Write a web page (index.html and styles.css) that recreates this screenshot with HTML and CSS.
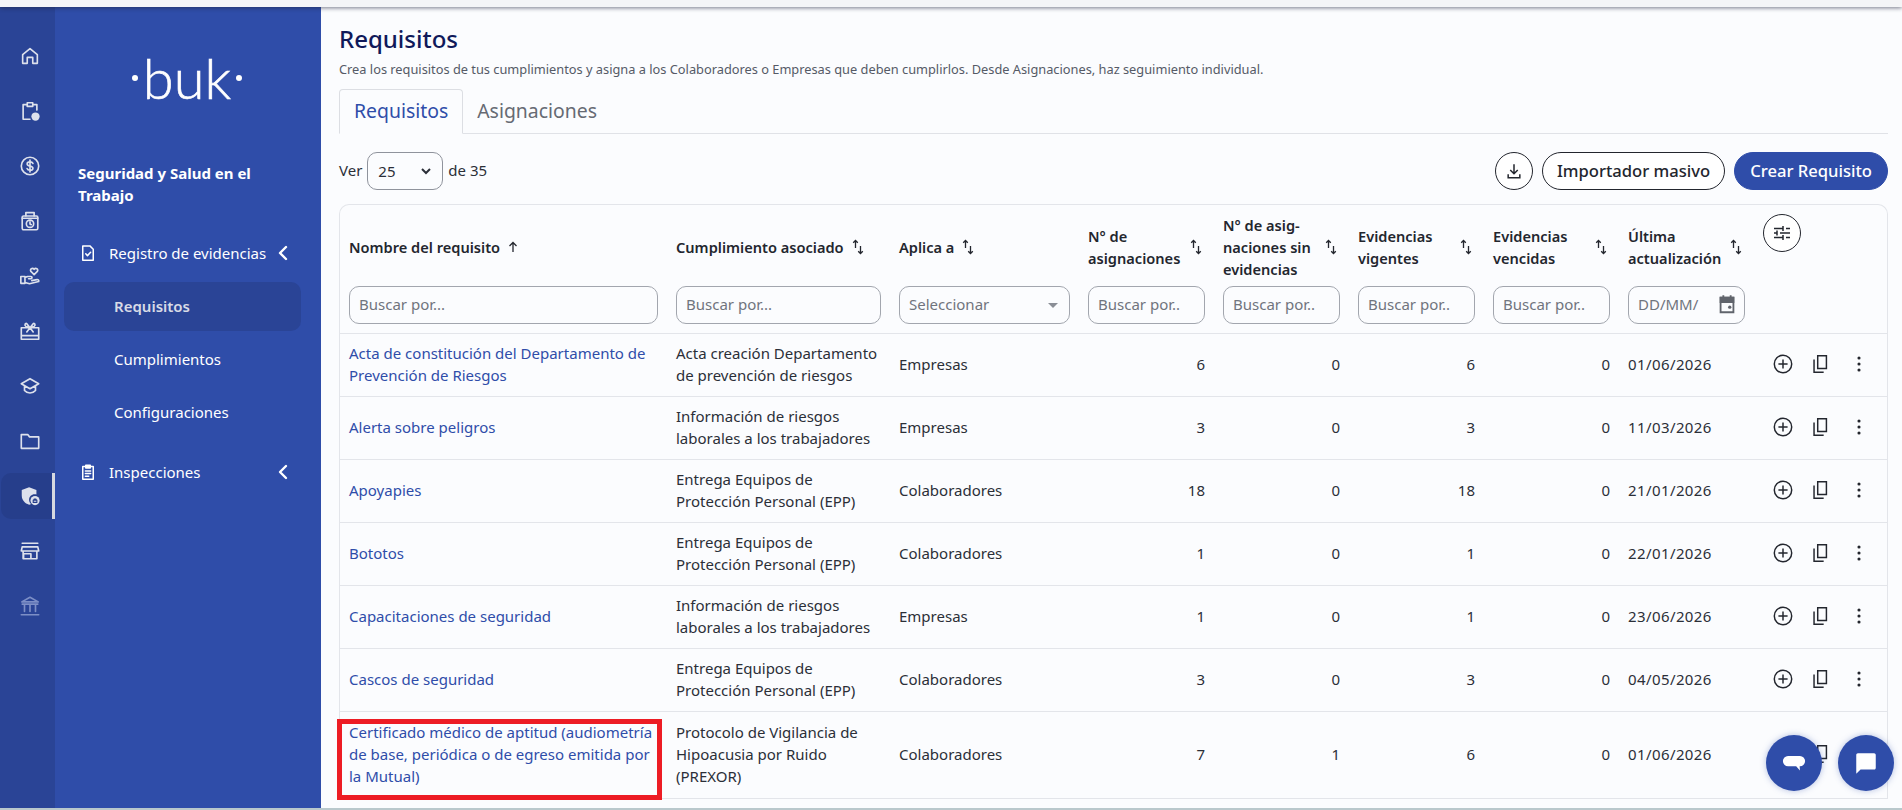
FILE: index.html
```html
<!DOCTYPE html>
<html lang="es">
<head>
    <meta charset="UTF-8">
    <meta name="viewport" content="width=device-width, initial-scale=1.0">
    <title>Requisitos</title>
    <link rel="stylesheet" href="styles.css">
</head>
<body>
    <svg class="sprite" xmlns="http://www.w3.org/2000/svg">
        <symbol id="i-sort" viewBox="0 0 14 16"><path d="M4.5 9V1.5M2.2 3.7 4.5 1.5l2.3 2.2M9.5 7v7.5M7.2 12.3l2.3 2.2 2.3-2.2"/></symbol>
        <symbol id="i-plus" viewBox="0 0 24 24"><circle cx="12" cy="12" r="9.5"/><path d="M12 7v10M7 12h10"/></symbol>
        <symbol id="i-copy" viewBox="0 0 24 24"><path d="M9.5 3H19v14H9.5zM5.5 7v14H16"/></symbol>
        <symbol id="i-dots" viewBox="0 0 24 24"><circle cx="12" cy="5.5" r="1.7"/><circle cx="12" cy="12" r="1.7"/><circle cx="12" cy="18.5" r="1.7"/></symbol>
    </svg>

    <div class="topbar"></div>
    <div class="app">
        <nav class="rail">
            <a class="rail-item"><svg viewBox="0 0 24 24"><path d="M4 10.5 12 4l8 6.5V20h-5v-6.5H9V20H4z"/></svg></a>
            <a class="rail-item"><svg viewBox="0 0 24 24"><path d="M9 5H4.5v16H12M15 5h4.5v6M9 3h6v4H9z"/><circle class="solid" cx="18" cy="18" r="4.5"/></svg></a>
            <a class="rail-item"><svg viewBox="0 0 24 24"><circle cx="12" cy="12" r="9.5"/><path d="M15.2 9.2c-.5-1.100-1.700-1.700-3.200-1.700-1.800 0-3.100.9-3.100 2.200 0 3 6.300 1.600 6.300 4.700 0 1.300-1.400 2.200-3.200 2.200-1.500 0-2.800-.7-3.200-1.800M12 5.5v13"/></svg></a>
            <a class="rail-item"><svg viewBox="0 0 24 24"><rect x="3.5" y="6.5" width="17" height="15" rx="1.5"/><path d="M7.5 6.5V2.8h9v3.700M3.5 9h17"/><circle cx="12" cy="15" r="4"/><path d="M12 13v2.200l1.400.8"/></svg></a>
            <a class="rail-item"><svg viewBox="0 0 24 24"><path d="M2 12.5h4.500V20H2zM6.500 13.500l3-1h3.500c1.600 0 1.600 2.500 0 2.500h-2.500M6.500 19l5 1.500 10-2.500c.5-1.800-1-2.300-2-2l-5.500 1"/><path d="M16.5 10.500 13 7c-1.700-2.300 1.800-4.700 3.500-2.200 1.700-2.500 5.200-.1 3.500 2.200z"/></svg></a>
            <a class="rail-item"><svg viewBox="0 0 24 24"><path d="M2.5 8.500h19V21h-19zM2.500 17h19M12 8.500 8.500 4c-1.500-1-3 1.500-1 3l4.500 1.500zM12 8.500 15.500 4c1.500-1 3 1.500 1 3L12 8.500zM8.500 13 12 8.500l3.500 4.500"/></svg></a>
            <a class="rail-item"><svg viewBox="0 0 24 24"><path d="M12 4 2.500 9.500 12 15l9.500-5.500zM6 12v5c3 3.500 9 3.500 12 0v-5"/></svg></a>
            <a class="rail-item"><svg viewBox="0 0 24 24"><path d="M2.5 5h7l2 2.500h10V20h-19z"/></svg></a>
            <a class="rail-item rail-active"><svg viewBox="0 0 24 24"><path class="solid" d="M11 2.500 3 5.500v6c0 5 3.500 8.700 8 10 .8-.2 1.500-.5 2.200-.9-1.300-1.100-2.200-2.700-2.200-4.600 0-3.300 2.700-6 6-6 .7 0 1.400.1 2 .4V5.500z"/><circle class="solid" cx="17.5" cy="17" r="5"/><path class="hole" d="M15.5 16.500h4V19h-4zM16.500 16.500v-1.200h2v1.200"/></svg></a>
            <a class="rail-item"><svg viewBox="0 0 24 24"><path d="M3.5 3.500h17M3.500 7.500h17l1 4.500H2.500zM4.500 12v8.500h15V12M5 20.500V15h8v5.500"/></svg></a>
            <a class="rail-item rail-dim"><svg viewBox="0 0 24 24"><path d="M12 2.500 3 7.500h18zM2.500 21.500h19M6 11v7M12 11v7M18 11v7M3.500 10h17"/></svg></a>
        </nav>

        <aside class="panel">
            <div class="logo"><span class="logo-dot"></span><span class="logo-text">buk</span><span class="logo-dot"></span></div>
            <h2 class="module">Seguridad y Salud en el Trabajo</h2>
            <div class="menu-head">
                <svg viewBox="0 0 24 24"><path d="M5 2.500h9.500L19 7v14.500H5zM9 13l2.300 2.500L15.500 11"/></svg>
                <span>Registro de evidencias</span>
                <svg class="chev" viewBox="0 0 12 16"><path d="M9 2 3 8l6 6"/></svg>
            </div>
            <a class="menu-sub menu-current">Requisitos</a>
            <a class="menu-sub">Cumplimientos</a>
            <a class="menu-sub">Configuraciones</a>
            <div class="menu-head menu-second">
                <svg viewBox="0 0 24 24"><path d="M5 4.500h14v17H5zM9 3h6v3.500H9zM8.500 10.500h7M8.500 14h7M8.500 17.500H13"/></svg>
                <span>Inspecciones</span>
                <svg class="chev" viewBox="0 0 12 16"><path d="M9 2 3 8l6 6"/></svg>
            </div>
        </aside>

        <main class="main">
            <h1 class="title">Requisitos</h1>
            <p class="subtitle">Crea los requisitos de tus cumplimientos y asigna a los Colaboradores o Empresas que deben cumplirlos. Desde Asignaciones, haz seguimiento individual.</p>

            <div class="tabs">
                <a class="tab tab-active">Requisitos</a>
                <a class="tab">Asignaciones</a>
            </div>

            <div class="toolbar">
                <div class="pager">
                    <span>Ver</span>
                    <div class="page-select"><span>25</span>
                        <svg viewBox="0 0 12 8"><path d="M2 2l4 4 4-4"/></svg>
                    </div>
                    <span>de 35</span>
                </div>
                <div class="actions">
                    <button class="btn btn-icon"><svg viewBox="0 0 24 24"><path d="M12 4v11M7.500 10.800 12 15.200l4.500-4.400M5 16v4h14v-4"/></svg></button>
                    <button class="btn">Importador masivo</button>
                    <button class="btn btn-primary">Crear Requisito</button>
                </div>
            </div>

            <div class="table-box">
                <table class="grid">
                    <colgroup>
                        <col class="c-name"><col class="c-comp"><col class="c-apply">
                        <col class="c-num"><col class="c-num"><col class="c-num"><col class="c-num"><col class="c-num">
                        <col class="c-act">
                    </colgroup>
                    <thead>
                        <tr class="head-row">
                            <th><div class="th-in th-auto">Nombre del requisito <svg class="sort-up" viewBox="0 0 12 12"><path d="M6 11V1.500M2.500 5 6 1.500 9.500 5"/></svg></div></th>
                            <th><div class="th-in th-auto">Cumplimiento asociado <svg class="sort"><use href="#i-sort"/></svg></div></th>
                            <th><div class="th-in th-auto">Aplica a <svg class="sort"><use href="#i-sort"/></svg></div></th>
                            <th><div class="th-in"><span>N° de asignaciones</span><svg class="sort"><use href="#i-sort"/></svg></div></th>
                            <th><div class="th-in"><span>N° de asig-<br>naciones sin evidencias</span><svg class="sort"><use href="#i-sort"/></svg></div></th>
                            <th><div class="th-in"><span>Evidencias vigentes</span><svg class="sort"><use href="#i-sort"/></svg></div></th>
                            <th><div class="th-in"><span>Evidencias vencidas</span><svg class="sort"><use href="#i-sort"/></svg></div></th>
                            <th><div class="th-in"><span>Última actualización</span><svg class="sort"><use href="#i-sort"/></svg></div></th>
                            <th class="th-tune"><button class="btn btn-icon"><svg viewBox="0 0 24 24"><path d="M4 7.500h9M16 7.500h4M13 5v5M4 12h3M10 12h10M7 9.500v5M4 16.500h9M16 16.500h4M13 14v5"/></svg></button></th>
                        </tr>
                        <tr class="filter-row">
                            <td><div class="field">Buscar por...</div></td>
                            <td><div class="field">Buscar por...</div></td>
                            <td><div class="field field-select">Seleccionar<i class="caret"></i></div></td>
                            <td><div class="field">Buscar por..</div></td>
                            <td><div class="field">Buscar por..</div></td>
                            <td><div class="field">Buscar por..</div></td>
                            <td><div class="field">Buscar por..</div></td>
                            <td><div class="field field-date"><span>DD/MM/</span>
                                <svg viewBox="0 0 24 24"><path d="M5 5h14v16H5z"/><path d="M5 5h14v5H5zM8 2.500V5M16 2.500V5" class="cal-top"/><circle class="cal-dot" cx="15" cy="15.500" r="1.800"/></svg>
                            </div></td>
                            <td></td>
                        </tr>
                    </thead>
                    <tbody>
                        <tr>
                            <td><a class="link">Acta de constitución del Departamento de Prevención de Riesgos</a></td>
                            <td>Acta creación Departamento de prevención de riesgos</td>
                            <td>Empresas</td>
                            <td class="num">6</td><td class="num">0</td><td class="num">6</td><td class="num">0</td>
                            <td class="date">01/06/2026</td>
                            <td><div class="row-acts"><svg class="ra"><use href="#i-plus"/></svg><svg class="ra"><use href="#i-copy"/></svg><svg class="ra ra-dots"><use href="#i-dots"/></svg></div></td>
                        </tr>
                        <tr>
                            <td><a class="link">Alerta sobre peligros</a></td>
                            <td>Información de riesgos laborales a los trabajadores</td>
                            <td>Empresas</td>
                            <td class="num">3</td><td class="num">0</td><td class="num">3</td><td class="num">0</td>
                            <td class="date">11/03/2026</td>
                            <td><div class="row-acts"><svg class="ra"><use href="#i-plus"/></svg><svg class="ra"><use href="#i-copy"/></svg><svg class="ra ra-dots"><use href="#i-dots"/></svg></div></td>
                        </tr>
                        <tr>
                            <td><a class="link">Apoyapies</a></td>
                            <td>Entrega Equipos de Protección Personal (EPP)</td>
                            <td>Colaboradores</td>
                            <td class="num">18</td><td class="num">0</td><td class="num">18</td><td class="num">0</td>
                            <td class="date">21/01/2026</td>
                            <td><div class="row-acts"><svg class="ra"><use href="#i-plus"/></svg><svg class="ra"><use href="#i-copy"/></svg><svg class="ra ra-dots"><use href="#i-dots"/></svg></div></td>
                        </tr>
                        <tr>
                            <td><a class="link">Bototos</a></td>
                            <td>Entrega Equipos de Protección Personal (EPP)</td>
                            <td>Colaboradores</td>
                            <td class="num">1</td><td class="num">0</td><td class="num">1</td><td class="num">0</td>
                            <td class="date">22/01/2026</td>
                            <td><div class="row-acts"><svg class="ra"><use href="#i-plus"/></svg><svg class="ra"><use href="#i-copy"/></svg><svg class="ra ra-dots"><use href="#i-dots"/></svg></div></td>
                        </tr>
                        <tr>
                            <td><a class="link">Capacitaciones de seguridad</a></td>
                            <td>Información de riesgos laborales a los trabajadores</td>
                            <td>Empresas</td>
                            <td class="num">1</td><td class="num">0</td><td class="num">1</td><td class="num">0</td>
                            <td class="date">23/06/2026</td>
                            <td><div class="row-acts"><svg class="ra"><use href="#i-plus"/></svg><svg class="ra"><use href="#i-copy"/></svg><svg class="ra ra-dots"><use href="#i-dots"/></svg></div></td>
                        </tr>
                        <tr>
                            <td><a class="link">Cascos de seguridad</a></td>
                            <td>Entrega Equipos de Protección Personal (EPP)</td>
                            <td>Colaboradores</td>
                            <td class="num">3</td><td class="num">0</td><td class="num">3</td><td class="num">0</td>
                            <td class="date">04/05/2026</td>
                            <td><div class="row-acts"><svg class="ra"><use href="#i-plus"/></svg><svg class="ra"><use href="#i-copy"/></svg><svg class="ra ra-dots"><use href="#i-dots"/></svg></div></td>
                        </tr>
                        <tr class="row-tall">
                            <td class="marked"><a class="link">Certificado médico de aptitud (audiometría de base, periódica o de egreso emitida por la Mutual)</a><div class="red-box"></div></td>
                            <td>Protocolo de Vigilancia de Hipoacusia por Ruido (PREXOR)</td>
                            <td>Colaboradores</td>
                            <td class="num">7</td><td class="num">1</td><td class="num">6</td><td class="num">0</td>
                            <td class="date">01/06/2026</td>
                            <td><div class="row-acts"><svg class="ra"><use href="#i-plus"/></svg><svg class="ra"><use href="#i-copy"/></svg><svg class="ra ra-dots"><use href="#i-dots"/></svg></div></td>
                        </tr>
                    </tbody>
                </table>
            </div>
        </main>
    </div>
    <div class="bottombar"></div>

    <button class="fab fab-one"><svg viewBox="0 0 24 24"><path d="M6.500 5.500h11a4.500 4.500 0 0 1 0 9.500h-.3l.3 4-3.500-4h-7.500a4.500 4.500 0 0 1 0-9.500z"/></svg></button>
    <button class="fab fab-two"><svg viewBox="0 0 24 24"><path d="M4.500 3h15c.8 0 1.500.7 1.500 1.500v12c0 .8-.7 1.500-1.500 1.500H7l-4 4V4.500C3 3.700 3.700 3 4.500 3z"/></svg></button>
</body>
</html>
```
FILE: styles.css
```css
* {
    box-sizing: border-box;
}
html, body {
    height: 100%;
}
body {
    margin: 0;
    height: 100vh;
    overflow: hidden;
    display: flex;
    flex-direction: column;
    font-family: "Noto Sans", "Open Sans", sans-serif;
    font-size: 15px;
    color: #2b2f38;
    background: #fbfcfe;
}
.sprite {
    display: none;
}
.topbar {
    height: 7px;
    flex: none;
    background: #f4f5f7;
    box-shadow: 0 1px 4px rgba(30, 35, 60, 0.6);
    position: relative;
    z-index: 2;
}
.bottombar {
    height: 2px;
    flex: none;
    background: #b9c8cc;
}
.app {
    flex: 1;
    display: flex;
    min-height: 0;
}

/* icon rail */
.rail {
    width: 55px;
    flex: none;
    background: #2a4496;
    padding-top: 26px;
    display: flex;
    flex-direction: column;
    gap: 9px;
}
.rail-item {
    height: 46px;
    display: flex;
    align-items: center;
    justify-content: center;
    border-radius: 10px 0 0 10px;
    margin-left: 1px;
    padding-left: 3px;
}
.rail-item svg {
    width: 22px;
    height: 22px;
    fill: none;
    stroke: #dde1ec;
    stroke-width: 1.8;
    stroke-linejoin: round;
    stroke-linecap: round;
}
.rail-item svg .solid {
    fill: #dde1ec;
    stroke: none;
}
.rail-item svg .hole {
    stroke: #263e8b;
    stroke-width: 1.2;
}
.rail-active {
    background: #263e8b;
    border-right: 3px solid #d6d9e0;
    padding-left: 6px;
}
.rail-dim svg {
    stroke: #7d8fc6;
}

/* module menu */
.panel {
    width: 266px;
    flex: none;
    background: #2f4da9;
    color: #fff;
    padding: 0 20px 0 9px;
}
.logo {
    height: 42px;
    margin-top: 50px;
    padding-left: 9px;
    display: flex;
    align-items: center;
    justify-content: center;
    gap: 5px;
}
.logo-text {
    font-family: "Lato", sans-serif;
    font-weight: 300;
    font-size: 56px;
    line-height: 42px;
    -webkit-text-stroke: 0.6px #fff;
}
.logo-dot {
    width: 6px;
    height: 6px;
    border-radius: 50%;
    background: #fff;
}
.module {
    margin: 63px 0 0 14px;
    width: 200px;
    font-size: 15px;
    line-height: 22px;
    font-weight: 700;
}
.menu-head {
    display: flex;
    align-items: center;
    height: 22px;
    margin: 36px 0 18px 15px;
    font-size: 15px;
}
.menu-head svg {
    width: 18px;
    height: 18px;
    fill: none;
    stroke: #fff;
    stroke-width: 2;
    stroke-linejoin: round;
    stroke-linecap: round;
    margin-right: 12px;
    flex: none;
}
.menu-head span {
    width: 168px;
    flex: none;
    white-space: nowrap;
}
.menu-head .chev {
    width: 12px;
    height: 16px;
    stroke-width: 2.4;
    margin: 0;
}
.menu-second {
    margin-top: 24px;
}
.menu-sub {
    display: flex;
    align-items: center;
    height: 49px;
    padding: 0 0 2px 50px;
    border-radius: 10px;
    font-size: 15px;
    margin-bottom: 4px;
}
.menu-current {
    background: #2a4496;
    color: #d8dbe6;
    font-weight: 600;
}

/* content */
.main {
    flex: 1;
    min-width: 0;
    padding: 0 14px 0 18px;
    overflow: hidden;
}
.title {
    margin: 17px 0 0;
    font-size: 24px;
    line-height: 30px;
    font-weight: 500;
    color: #10195a;
}
.subtitle {
    margin: 6px 0 0;
    font-size: 12.8px;
    line-height: 18px;
    color: #555a66;
}
.tabs {
    display: flex;
    height: 45px;
    margin-top: 11px;
    border-bottom: 1px solid #e0e2e7;
}
.tab {
    display: flex;
    align-items: center;
    padding: 0 14px 2px;
    font-size: 19.4px;
    color: #666a73;
}
.tab-active {
    color: #2f4da9;
    border: 1px solid #dcdee3;
    border-bottom: 1px solid #fbfcfe;
    height: 45px;
    border-radius: 4px 4px 0 0;
}
.toolbar {
    display: flex;
    justify-content: space-between;
    margin-top: 18px;
    height: 38px;
}
.pager {
    display: flex;
    align-items: center;
    gap: 5px;
    font-size: 15px;
}
.pager > span {
    padding-bottom: 2px;
}
.page-select {
    width: 76px;
    height: 38px;
    border: 1px solid #8f939c;
    border-radius: 10px;
    display: flex;
    align-items: center;
    justify-content: space-between;
    padding: 0 10px;
}
.page-select svg {
    width: 12px;
    height: 8px;
    fill: none;
    stroke: #2b2f38;
    stroke-width: 2;
}
.actions {
    display: flex;
    gap: 9px;
}
.btn {
    height: 38px;
    padding: 0 14px 2px;
    border: 1px solid #23262e;
    border-radius: 19px;
    background: #fff;
    color: #23262e;
    font-family: inherit;
    font-size: 16.6px;
    font-weight: 500;
}
.btn-primary {
    padding: 0 15px 2px;
    background: #2f4da9;
    border-color: #2f4da9;
    color: #fff;
}
.btn-icon {
    width: 38px;
    padding: 0;
    display: flex;
    align-items: center;
    justify-content: center;
}
.btn-icon svg {
    width: 20px;
    height: 20px;
    fill: none;
    stroke: #23262e;
    stroke-width: 1.8;
}
.th-tune .btn-icon svg {
    width: 24px;
    height: 24px;
    stroke-width: 1.5;
}

/* table */
.table-box {
    margin-top: 14px;
    border: 1px solid #e3e5ea;
    border-bottom: 0;
    border-radius: 10px 10px 0 0;
}
.grid {
    width: 100%;
    table-layout: fixed;
    border-collapse: collapse;
}
.c-name { width: 327px; }
.c-comp { width: 223px; }
.c-apply { width: 189px; }
.c-num { width: 135px; }
.grid th, .grid td {
    padding: 0 9px;
    text-align: left;
    line-height: 22px;
    vertical-align: middle;
}
.head-row th {
    height: 81px;
    padding-top: 3px;
    font-size: 14.6px;
    font-weight: 600;
    color: #23262e;
}
.th-in {
    display: flex;
    align-items: center;
    justify-content: space-between;
}
.th-auto {
    justify-content: flex-start;
    gap: 7px;
}
.sort {
    width: 14px;
    height: 16px;
    flex: none;
    margin-right: 2px;
    fill: none;
    stroke: #23262e;
    stroke-width: 1.3;
}
.sort-up {
    width: 12px;
    height: 12px;
    fill: none;
    stroke: #23262e;
    stroke-width: 1.3;
}
.grid .th-tune {
    vertical-align: top;
    padding-top: 9px;
}
.filter-row td {
    height: 47px;
    padding-bottom: 9px;
    border-bottom: 1px solid #e3e5ea;
}
.field {
    height: 38px;
    border: 1px solid #a2a6ae;
    border-radius: 10px;
    padding: 0 9px 2px;
    display: flex;
    align-items: center;
    color: #70747d;
    white-space: nowrap;
    overflow: hidden;
}
.field-select {
    justify-content: space-between;
}
.caret {
    width: 0;
    height: 0;
    border-left: 5px solid transparent;
    border-right: 5px solid transparent;
    border-top: 5px solid #8a8e96;
    margin: 2px 2px 0 0;
}
.field-date {
    justify-content: space-between;
    padding-right: 6px;
}
.field-date svg {
    width: 22px;
    height: 22px;
    flex: none;
    fill: none;
    stroke: #60646c;
    stroke-width: 2;
}
.field-date .cal-top {
    fill: #60646c;
}
.field-date .cal-dot {
    fill: #60646c;
    stroke: none;
}
.grid tbody td {
    height: 63px;
    padding-bottom: 2px;
    border-bottom: 1px solid #e3e5ea;
    color: #2b2f38;
}
.grid tbody .row-tall td {
    height: 87px;
}
.link {
    color: #2f4da9;
}
.grid td.num {
    text-align: right;
}
.grid td.date {
    letter-spacing: 0.4px;
}
.row-acts {
    display: flex;
    align-items: center;
    gap: 15px;
    padding-left: 9px;
}
.ra {
    width: 22px;
    height: 22px;
    flex: none;
    fill: none;
    stroke: #23262e;
    stroke-width: 1.6;
}
.ra-dots {
    margin-left: 2px;
    fill: #23262e;
    stroke: none;
}
.marked {
    position: relative;
}
.red-box {
    position: absolute;
    left: -3px;
    top: 7px;
    width: 325px;
    height: 81px;
    border: 5px solid #ed1c24;
    pointer-events: none;
}

/* chat buttons */
.fab {
    position: fixed;
    top: 735px;
    width: 56px;
    height: 56px;
    border: 0;
    border-radius: 50%;
    background: #2f4da9;
    display: flex;
    align-items: center;
    justify-content: center;
    padding: 0;
    box-shadow: 0 0 6px rgba(47, 77, 169, 0.35);
}
.fab svg {
    width: 26px;
    height: 26px;
    fill: #fff;
}
.fab-one {
    left: 1766px;
}
.fab-two {
    left: 1838px;
}
```
